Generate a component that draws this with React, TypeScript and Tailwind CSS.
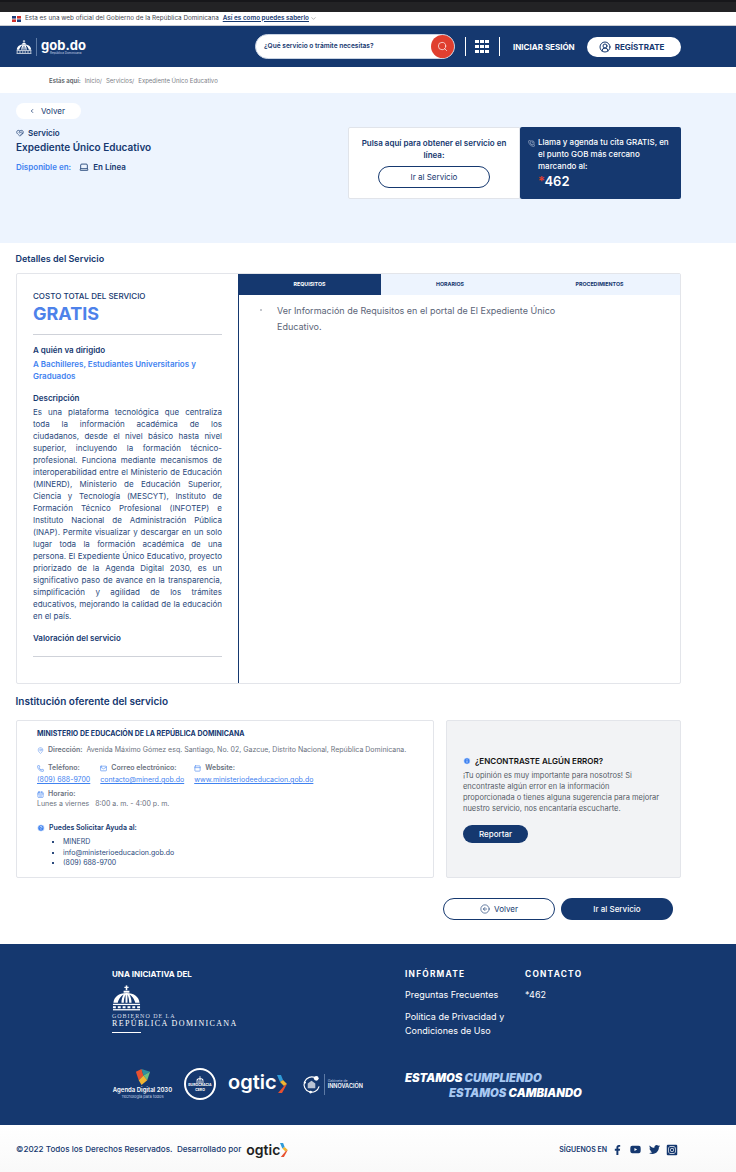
import { ChevronLeft, ChevronDown, Search, Laptop, MapPin, Phone, Mail, CalendarDays, CircleHelp, Info, PanelTop, CircleUserRound, CircleArrowLeft, PhoneCall, HeartHandshake } from 'lucide-react';
import { FaFacebookF, FaYoutube, FaTwitter, FaInstagramSquare } from 'react-icons/fa';

const descripcion = [
  'Es una plataforma tecnológica que centraliza',
  'toda la información académica de los',
  'ciudadanos, desde el nivel básico hasta nivel',
  'superior, incluyendo la formación técnico-',
  'profesional. Funciona mediante mecanismos de',
  'interoperabilidad entre el Ministerio de Educación',
  '(MINERD), Ministerio de Educación Superior,',
  'Ciencia y Tecnología (MESCYT), Instituto de',
  'Formación Técnico Profesional (INFOTEP) e',
  'Instituto Nacional de Administración Pública',
  '(INAP). Permite visualizar y descargar en un solo',
  'lugar toda la formación académica de una',
  'persona. El Expediente Único Educativo, proyecto',
  'priorizado de la Agenda Digital 2030, es un',
  'significativo paso de avance en la transparencia,',
  'simplificación y agilidad de los trámites',
  'educativos, mejorando la calidad de la educación',
];

function Dome({ className }: { className?: string }) {
  return (
    <svg viewBox="0 0 30 26" className={className} fill="currentColor">
      <rect x="14.2" y="0" width="1.6" height="5" />
      <rect x="12.8" y="1.4" width="4.4" height="1.2" />
      <path d="M12 5.5h6v2h-6z" />
      <path d="M1.5 18C2 12 7 7.8 15 7.8S28 12 28.5 18h-3L24 18c-.5-3-3-7-6-8.5 1.5 2.5 2.2 5.5 2.2 8.5h-2.4c0-3-.6-6-1.8-8.5v8.5h-2v-8.5c-1.2 2.5-1.8 5.5-1.8 8.5H9.800c0-3 .7-6 2.200-8.500C9 11 6.500 15 6 18H1.500z" />
      <rect x="1" y="19" width="28" height="1.300" />
      <path d="M1 21.500h3v2H1zM6 21.500h3v2H6zM11 21.500h3v2h-3zM16 21.500h3v2h-3zM21 21.500h3v2h-3zM26 21.500h3v2h-3z" />
      <rect x="1" y="24.500" width="28" height="1.300" />
    </svg>
  );
}

function OgticArrow() {
  return (
    <svg viewBox="0 0 10 18" className="h-full w-auto">
      <path d="M0 0h4l2 5-3 2z" fill="#2f9bd8" />
      <path d="M3 7l3-2 4 4-3 2z" fill="#f2b632" />
      <path d="M7 11l3-2-5 9H1z" fill="#e8502f" />
    </svg>
  );
}

function App() {
  return (
    <div className="w-[736px] bg-white font-['Inter',sans-serif] text-[#15386f] overflow-hidden">
      <div className="h-[12px] bg-[#232325] border-t-2 border-[#17171a]" />
      <div className="h-[14px] flex items-center pl-[12px] border-b border-[#c9ccd2] bg-white">
        <svg viewBox="0 0 9 6" className="w-[9px] h-[6px] mr-[4px]">
          <rect width="9" height="6" fill="#fff" />
          <rect width="4" height="2.600" fill="#1d3f7c" />
          <rect x="5" width="4" height="2.600" fill="#d0312d" />
          <rect y="3.400" width="4" height="2.600" fill="#d0312d" />
          <rect x="5" y="3.400" width="4" height="2.600" fill="#1d3f7c" />
        </svg>
        <span className="text-[6.350px] text-[#44474f] whitespace-nowrap">Esta es una web oficial del Gobierno de la República Dominicana</span>
        <span className="text-[6.350px] font-semibold text-[#15386f] underline ml-[4px] whitespace-nowrap">Así es como puedes saberlo</span>
        <ChevronDown className="w-[7px] h-[7px] text-[#888] ml-[1px]" />
      </div>

      <header className="h-[41px] bg-[#15386f] flex items-center pl-[16px] text-white">
        <Dome className="w-[16px] h-[14px]" />
        <div className="w-px h-[18px] bg-[#5d7aa5] ml-[4px] mr-[4px]" />
        <div className="flex flex-col mr-[170px] w-[44px]">
          <span className="text-[13px] font-bold leading-[13px]">gob.do</span>
          <span className="text-[3px] text-[#c5d2e6] leading-[3px] pl-[9px] whitespace-nowrap">República Dominicana</span>
        </div>
        <div className="relative w-[200px] h-[25px] rounded-full bg-white border border-[#c8d3e3] flex items-center pl-[8px]">
          <span className="text-[6.600px] font-semibold text-[#15386f] whitespace-nowrap">¿Qué servicio o trámite necesitas?</span>
          <span className="absolute right-0 top-0 w-[23px] h-[23px] rounded-full bg-[#e03f2f] flex items-center justify-center">
            <Search className="w-[11px] h-[11px] text-white" strokeWidth={1.500} />
          </span>
        </div>
        <div className="w-px h-[19px] bg-white ml-[10px]" />
        <div className="grid grid-cols-3 gap-[1.500px] ml-[9px] w-[14px]">
          {Array.from({ length: 9 }).map((_, i) => (
            <span key={i} className="w-[3.500px] h-[3.500px] bg-white" />
          ))}
        </div>
        <div className="w-px h-[19px] bg-white ml-[10px]" />
        <span className="text-[8px] font-bold ml-[13px] whitespace-nowrap">INICIAR SESIÓN</span>
        <div className="ml-[12px] w-[94px] h-[20px] rounded-full bg-white flex items-center pl-[12px] text-[#15386f]">
          <CircleUserRound className="w-[12px] h-[12px]" />
          <span className="text-[8px] font-bold ml-[4px]">REGÍSTRATE</span>
        </div>
      </header>

      <div className="h-[26px] flex items-center pl-[49px] text-[6px] text-[#7c8088] whitespace-nowrap">
        <span className="font-semibold text-[#5b5f67] mr-[4px]">Estás aquí:</span>
        <span className="mr-[4px]">Inicio/</span>
        <span className="mr-[4px]">Servicios/</span>
        <span>Expediente Único Educativo</span>
      </div>

      <section className="h-[150px] bg-[#edf4fe] pt-[10px] pl-[16px] pr-[55px]">
        <div className="w-[65px] h-[16px] rounded-full bg-white flex items-center pl-[13px] text-[8px]">
          <ChevronLeft className="w-[6px] h-[6px] mr-[6px]" strokeWidth={3} />
          <span>Volver</span>
        </div>
        <div className="flex justify-between">
          <div className="pt-[9px]">
            <div className="flex items-center text-[8px] font-semibold h-[10px]">
              <HeartHandshake className="w-[8px] h-[8px] mr-[4px]" />
              Servicio
            </div>
            <h1 className="text-[10px] font-semibold leading-[16px] mt-[1px]">Expediente Único Educativo</h1>
            <div className="flex items-center text-[8px] font-semibold mt-[7px] h-[10px]">
              <span className="text-[#3f82f0] mr-[8px]">Disponible en:</span>
              <Laptop className="w-[10px] h-[10px] mr-[4px]" />
              En Línea
            </div>
          </div>
          <div className="flex mt-[8px]">
            <div className="w-[172px] h-[72px] bg-white border border-[#e1e4ea] rounded-l-[2px] flex flex-col items-center pt-[9px]">
              <p className="text-[8px] leading-[12px] font-semibold text-center w-[150px]">Pulsa aquí para obtener el servicio en línea:</p>
              <div className="w-[112px] h-[22px] mt-[5px] border border-[#15386f] rounded-full flex items-center justify-center text-[8px]">Ir al Servicio</div>
            </div>
            <div className="w-[161px] h-[72px] bg-[#15386f] rounded-[2px] text-white pt-[9px] pl-[8px] flex">
              <PhoneCall className="w-[7px] h-[7px] mt-[4px] mr-[3px] text-[#b9c6da]" />
              <div>
                <p className="text-[8px] leading-[12px] font-medium w-[135px]">Llama y agenda tu cita GRATIS, en el punto GOB más cercano marcando al:</p>
                <p className="text-[13px] font-semibold leading-[18px]"><span className="text-[#e03f2f]">*</span>462</p>
              </div>
            </div>
          </div>
        </div>
      </section>

      <div className="pl-[16px] w-[681px]">
        <h2 className="text-[9px] font-semibold leading-[12px] mt-[10px] -ml-[0.5px]">Detalles del Servicio</h2>
        <div className="flex h-[411px] mt-[8px] border border-[#e3e5ea] rounded-[2px]">
          <aside className="w-[221px] pl-[16px] pr-[16px] pt-[17px] shrink-0">
            <p className="text-[8px] font-medium leading-[10px]">COSTO TOTAL DEL SERVICIO</p>
            <p className="text-[18px] font-bold text-[#4d82ea] leading-[24px] mt-[1px]">GRATIS</p>
            <div className="h-px bg-[#cfd2d9] mt-[8px]" />
            <p className="text-[8px] font-semibold leading-[10px] mt-[10px]">A quién va dirigido</p>
            <p className="text-[8px] font-semibold text-[#3f82f0] leading-[12px] mt-[3px]">A Bachilleres, Estudiantes Universitarios y Graduados</p>
            <p className="text-[8px] font-semibold leading-[10px] mt-[11px]">Descripción</p>
            <div className="text-[8px] leading-[12px] mt-[3px] text-[#2b4a7d]">
              {descripcion.map((line) => (
                <p key={line} className="text-justify [text-align-last:justify]">{line}</p>
              ))}
              <p>en el país.</p>
            </div>
            <p className="text-[8px] font-semibold leading-[10px] mt-[11px]">Valoración del servicio</p>
            <div className="h-px bg-[#cfd2d9] mt-[13px]" />
          </aside>
          <div className="flex-1 border-l border-[#15386f]">
            <div className="grid grid-cols-[142px_138px_1fr] h-[21px] text-[5.300px] font-bold">
              <div className="-ml-px bg-[#15386f] text-white flex items-center justify-center">REQUISITOS</div>
              <div className="bg-[#edf4fe] flex items-center justify-center">HORARIOS</div>
              <div className="bg-[#edf4fe] flex items-center justify-center">PROCEDIMIENTOS</div>
            </div>
            <div className="flex pl-[21px] pt-[8px] text-[#5b6578]">
              <span className="w-[2px] h-[2px] bg-[#c4c7cd] mt-[6px] mr-[15px] shrink-0" />
              <p className="text-[9px] leading-[16px] w-[300px]">Ver Información de Requisitos en el portal de El Expediente Único Educativo.</p>
            </div>
          </div>
        </div>

        <h2 className="text-[10px] font-semibold leading-[14px] mt-[10px] -ml-[0.5px]">Institución oferente del servicio</h2>
        <div className="flex gap-[12px] mt-[12px]">
          <div className="w-[418px] h-[158px] border border-[#e3e5ea] rounded-[2px] pl-[20px] pt-[9px]">
            <p className="text-[7px] font-bold leading-[8px]">MINISTERIO DE EDUCACIÓN DE LA REPÚBLICA DOMINICANA</p>
            <div className="flex items-center text-[7px] text-[#6b7280] mt-[7px] h-[10px] whitespace-nowrap">
              <MapPin className="w-[7px] h-[7px] text-[#6f9ef0] mr-[4px]" />
              <span className="font-semibold mr-[4px]">Dirección:</span>
              <span>Avenida Máximo Gómez esq. Santiago, No. 02, Gazcue, Distrito Nacional, República Dominicana.</span>
            </div>
            <div className="flex gap-[10px] mt-[8px] text-[7px]">
              <div>
                <div className="flex items-center h-[10px] font-semibold text-[#6b7280]"><Phone className="w-[7px] h-[7px] text-[#3f82f0] mr-[4px]" />Teléfono:</div>
                <div className="text-[#3f82f0] underline leading-[10px] mt-[2px]">(809) 688-9700</div>
              </div>
              <div>
                <div className="flex items-center h-[10px] font-semibold text-[#6b7280]"><Mail className="w-[7px] h-[7px] text-[#3f82f0] mr-[4px]" />Correo electrónico:</div>
                <div className="text-[#3f82f0] underline leading-[10px] mt-[2px]">contacto@minerd.gob.do</div>
              </div>
              <div>
                <div className="flex items-center h-[10px] font-semibold text-[#6b7280]"><PanelTop className="w-[7px] h-[7px] text-[#3f82f0] mr-[4px]" />Website:</div>
                <div className="text-[#3f82f0] underline leading-[10px] mt-[2px]">www.ministeriodeeducacion.gob.do</div>
              </div>
            </div>
            <div className="flex items-center h-[10px] text-[7px] font-semibold text-[#6b7280] mt-[4px]"><CalendarDays className="w-[7px] h-[7px] text-[#3f82f0] mr-[4px]" />Horario:</div>
            <div className="text-[7px] text-[#6b7280] leading-[10px]">Lunes a viernes&nbsp;&nbsp; 8:00 a. m. - 4:00 p. m.</div>
            <div className="flex items-center h-[10px] text-[7px] font-semibold mt-[14px]"><CircleHelp className="w-[8px] h-[8px] text-white fill-[#3f82f0] mr-[4px]" />Puedes Solicitar Ayuda al:</div>
            <ul className="text-[7px] leading-[10.500px] mt-[4px] pl-[26px] list-[square] text-[#2b4a7d]">
              <li>MINERD</li>
              <li>info@ministerioeducacion.gob.do</li>
              <li>(809) 688-9700</li>
            </ul>
          </div>
          <div className="w-[235px] h-[158px] bg-[#f2f3f5] border border-[#e3e5ea] rounded-[2px] pl-[16px] pr-[12px] flex flex-col justify-center">
            <div className="flex items-center text-[8px] font-semibold text-[#111] h-[10px] whitespace-nowrap">
              <Info className="w-[8px] h-[8px] text-white fill-[#3f82f0] mr-[4px]" />
              ¿ENCONTRASTE ALGÚN ERROR?
            </div>
            <p className="text-[7.500px] leading-[11px] text-[#555b65] mt-[4px]">¡Tu opinión es muy importante para nosotros! Si encontraste algún error en la información<br />proporcionada o tienes alguna sugerencia para mejorar nuestro servicio, nos encantaría escucharte.</p>
            <div className="w-[65px] h-[18px] bg-[#15386f] text-white rounded-full text-[8px] font-medium flex items-center justify-center mt-[11px]">Reportar</div>
          </div>
        </div>
        <div className="flex justify-end gap-[6px] mt-[20px] pr-[8px]">
          <div className="w-[112px] h-[22px] border border-[#15386f] rounded-full flex items-center justify-center text-[8px]">
            <CircleArrowLeft className="w-[10px] h-[10px] mr-[4px]" strokeWidth={1.500} />
            Volver
          </div>
          <div className="w-[112px] h-[22px] bg-[#15386f] text-white rounded-full flex items-center justify-center text-[8px] font-medium">Ir al Servicio</div>
        </div>
      </div>

      <footer className="h-[181px] mt-[24px] bg-[#15386f] text-white flex pl-[112px]">
        <div className="w-[293px] pt-[25px]">
          <p className="text-[8px] font-bold leading-[10px]">UNA INICIATIVA DEL</p>
          <Dome className="w-[29px] h-[26px] mt-[6px]" />
          <p className="font-['Liberation_Serif',serif] text-[6px] tracking-[0.16em] leading-[8px] mt-[1px] text-[#d5dde9]">GOBIERNO DE LA</p>
          <p className="font-['Liberation_Serif',serif] text-[8px] tracking-[0.17em] leading-[8px] whitespace-nowrap">REPÚBLICA DOMINICANA</p>
          <div className="w-[29px] h-px bg-white mt-[4px]" />
          <div className="flex items-center mt-[35px]">
            <div className="w-[61px] flex flex-col items-center">
              <svg viewBox="0 0 20 18" className="w-[19px] h-[17px]">
                <path d="M3 3l6-3 2 7-5 5z" fill="#e8502f" />
                <path d="M9 0l9 3-7 4z" fill="#2f8f9d" />
                <path d="M18 3l-3 9-4-5z" fill="#6cbf84" />
                <path d="M6 12l5-5 4 5-6 5z" fill="#f2b632" />
              </svg>
              <span className="text-[6px] font-semibold leading-[8px] whitespace-nowrap">Agenda Digital 2030</span>
              <span className="text-[4px] leading-[5px] text-[#c5d2e6] whitespace-nowrap">Tecnología para todos</span>
            </div>
            <div className="ml-[11px] w-[32px] h-[32px] rounded-full border-2 border-white flex flex-col items-center justify-center">
              <Dome className="w-[8px] h-[7px]" />
              <span className="text-[3.500px] font-bold leading-[5px]">BUROCRACIA</span>
              <span className="text-[3.500px] font-bold leading-[4px]">CERO</span>
            </div>
            <div className="ml-[12px] flex items-center h-[18px]">
              <span className="text-[20px] font-semibold leading-none -mt-[4px]">ogtic</span>
              <OgticArrow />
            </div>
            <div className="ml-[15px] flex items-center">
              <svg viewBox="0 0 20 20" className="w-[19px] h-[19px]" fill="none" stroke="white">
                <path d="M14 3A8 8 0 1 0 18 12" strokeWidth="1.200" />
                <circle cx="15" cy="3.500" r="2.500" fill="white" stroke="none" />
                <circle cx="3" cy="8" r="1.200" fill="white" stroke="none" />
                <circle cx="9" cy="18" r="1.500" fill="white" stroke="none" />
                <path d="M6 9l4-3 4 3v5H6z" fill="white" stroke="none" opacity=".7" />
              </svg>
              <div className="w-px h-[21px] bg-[#5d7aa5] mx-[3px]" />
              <div className="leading-[5px] text-[#c5d2e6]">
                <p className="text-[3.500px]">Gabinete de</p>
                <p className="text-[5.500px] font-semibold text-white">INNOVACIÓN</p>
              </div>
            </div>
          </div>
        </div>
        <div className="flex-1 pt-[25px] relative">
          <div className="flex">
            <div className="w-[120px]">
              <p className="text-[8.300px] font-bold tracking-[0.15em] leading-[10px]">INFÓRMATE</p>
              <p className="text-[9px] leading-[14px] mt-[9px]">Preguntas Frecuentes</p>
              <p className="text-[9px] leading-[14px] mt-[8px] w-[110px]">Política de Privacidad y Condiciones de Uso</p>
            </div>
            <div>
              <p className="text-[8.300px] font-bold tracking-[0.15em] leading-[10px]">CONTACTO</p>
              <p className="text-[9px] leading-[14px] mt-[9px]">*462</p>
            </div>
          </div>
          <div className="mt-[33px] text-[11.300px] font-black italic leading-[15px] whitespace-nowrap">
            <p>ESTAMOS <span className="text-[#a7c8f2]">CUMPLIENDO</span></p>
            <p className="pl-[44px]"><span className="text-[#a7c8f2]">ESTAMOS</span> CAMBIANDO</p>
          </div>
        </div>
      </footer>

      <div className="h-[47px] pl-[16px] pr-[58px] pt-[2px] flex items-center bg-gradient-to-b from-white to-[#f9f9f9]">
        <span className="text-[8.100px] font-medium whitespace-nowrap">©2022 Todos los Derechos Reservados.&nbsp; Desarrollado por</span>
        <span className="ml-[5px] flex items-center h-[14px] text-[#222] text-[14px] font-semibold">ogtic<OgticArrow /></span>
        <div className="ml-auto flex items-center">
          <span className="text-[7px] font-semibold mr-[6px] mt-[2px] whitespace-nowrap">SÍGUENOS EN</span>
          <FaFacebookF className="w-[9px] h-[10px] mr-[8px]" />
          <FaYoutube className="w-[11px] h-[11px] mr-[8px]" />
          <FaTwitter className="w-[11px] h-[11px] mr-[6px]" />
          <FaInstagramSquare className="w-[12px] h-[12px]" />
        </div>
      </div>
    </div>
  );
}

export default App;
